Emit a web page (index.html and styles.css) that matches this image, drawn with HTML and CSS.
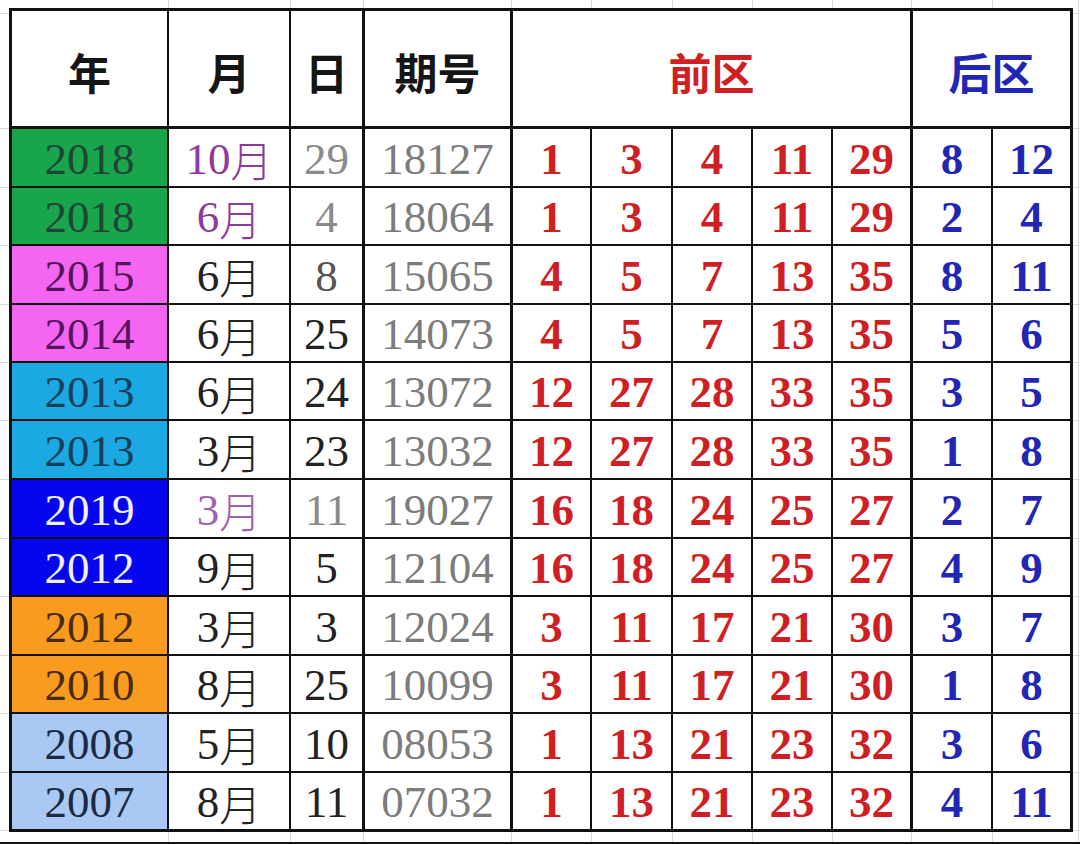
FILE: index.html
```html
<!DOCTYPE html>
<html lang="zh-CN">
<head>
<meta charset="utf-8">
<title>大乐透</title>
<link rel="stylesheet" href="styles.css">
</head>
<body>
<div class="sheet">
  <div class="c h">年</div>
  <div class="c h">月</div>
  <div class="c h tr">日</div>
  <div class="c h tr">期号</div>
  <div class="c h front tr span5">前区</div>
  <div class="c h back tr span2">后区</div>

  <div class="c yr green">2018</div><div class="c mo purple">10<span class="cj">月</span></div><div class="c dy gray tr">29</div><div class="c qi tr">18127</div>
  <div class="c r">1</div><div class="c r">3</div><div class="c r">4</div><div class="c r">11</div><div class="c r tr">29</div><div class="c b">8</div><div class="c b tr">12</div>

  <div class="c yr green">2018</div><div class="c mo purple">6<span class="cj">月</span></div><div class="c dy gray tr">4</div><div class="c qi tr">18064</div>
  <div class="c r">1</div><div class="c r">3</div><div class="c r">4</div><div class="c r">11</div><div class="c r tr">29</div><div class="c b">2</div><div class="c b tr">4</div>

  <div class="c yr pink">2015</div><div class="c mo">6<span class="cj">月</span></div><div class="c dy mid tr">8</div><div class="c qi tr">15065</div>
  <div class="c r">4</div><div class="c r">5</div><div class="c r">7</div><div class="c r">13</div><div class="c r tr">35</div><div class="c b">8</div><div class="c b tr">11</div>

  <div class="c yr pink">2014</div><div class="c mo">6<span class="cj">月</span></div><div class="c dy tr">25</div><div class="c qi tr">14073</div>
  <div class="c r">4</div><div class="c r">5</div><div class="c r">7</div><div class="c r">13</div><div class="c r tr">35</div><div class="c b">5</div><div class="c b tr">6</div>

  <div class="c yr cyan">2013</div><div class="c mo">6<span class="cj">月</span></div><div class="c dy tr">24</div><div class="c qi tr">13072</div>
  <div class="c r">12</div><div class="c r">27</div><div class="c r">28</div><div class="c r">33</div><div class="c r tr">35</div><div class="c b">3</div><div class="c b tr">5</div>

  <div class="c yr cyan">2013</div><div class="c mo">3<span class="cj">月</span></div><div class="c dy tr">23</div><div class="c qi tr">13032</div>
  <div class="c r">12</div><div class="c r">27</div><div class="c r">28</div><div class="c r">33</div><div class="c r tr">35</div><div class="c b">1</div><div class="c b tr">8</div>

  <div class="c yr blue">2019</div><div class="c mo lilac">3<span class="cj">月</span></div><div class="c dy gray tr">11</div><div class="c qi tr">19027</div>
  <div class="c r">16</div><div class="c r">18</div><div class="c r">24</div><div class="c r">25</div><div class="c r tr">27</div><div class="c b">2</div><div class="c b tr">7</div>

  <div class="c yr blue">2012</div><div class="c mo">9<span class="cj">月</span></div><div class="c dy tr">5</div><div class="c qi tr">12104</div>
  <div class="c r">16</div><div class="c r">18</div><div class="c r">24</div><div class="c r">25</div><div class="c r tr">27</div><div class="c b">4</div><div class="c b tr">9</div>

  <div class="c yr orange">2012</div><div class="c mo">3<span class="cj">月</span></div><div class="c dy tr">3</div><div class="c qi tr">12024</div>
  <div class="c r">3</div><div class="c r">11</div><div class="c r">17</div><div class="c r">21</div><div class="c r tr">30</div><div class="c b">3</div><div class="c b tr">7</div>

  <div class="c yr orange">2010</div><div class="c mo">8<span class="cj">月</span></div><div class="c dy tr">25</div><div class="c qi tr">10099</div>
  <div class="c r">3</div><div class="c r">11</div><div class="c r">17</div><div class="c r">21</div><div class="c r tr">30</div><div class="c b">1</div><div class="c b tr">8</div>

  <div class="c yr sky">2008</div><div class="c mo">5<span class="cj">月</span></div><div class="c dy tr">10</div><div class="c qi tr">08053</div>
  <div class="c r">1</div><div class="c r">13</div><div class="c r">21</div><div class="c r">23</div><div class="c r tr">32</div><div class="c b">3</div><div class="c b tr">6</div>

  <div class="c yr sky last">2007</div><div class="c mo last">8<span class="cj">月</span></div><div class="c dy tr last">11</div><div class="c qi tr last">07032</div>
  <div class="c r last">1</div><div class="c r last">13</div><div class="c r last">21</div><div class="c r last">23</div><div class="c r tr last">32</div><div class="c b last">4</div><div class="c b tr last">11</div>
</div>
<div class="bar"></div>
</body>
</html>
```

FILE: styles.css
```css
html, body {
  margin: 0;
  padding: 0;
}

body {
  width: 1080px;
  height: 844px;
  overflow: hidden;
  background-color: #ffffff;
  font-family: "Liberation Serif", "Noto Sans CJK SC", serif;
  background-image:
    linear-gradient(#d9d9d9, #d9d9d9), linear-gradient(#d9d9d9, #d9d9d9),
    linear-gradient(#d9d9d9, #d9d9d9), linear-gradient(#d9d9d9, #d9d9d9),
    linear-gradient(#d9d9d9, #d9d9d9), linear-gradient(#d9d9d9, #d9d9d9),
    linear-gradient(#d9d9d9, #d9d9d9), linear-gradient(#d9d9d9, #d9d9d9),
    linear-gradient(#d9d9d9, #d9d9d9), linear-gradient(#d9d9d9, #d9d9d9),
    linear-gradient(#d9d9d9, #d9d9d9), linear-gradient(#d9d9d9, #d9d9d9),
    linear-gradient(#d9d9d9, #d9d9d9), linear-gradient(#d9d9d9, #d9d9d9),
    linear-gradient(#d9d9d9, #d9d9d9), linear-gradient(#d9d9d9, #d9d9d9),
    linear-gradient(#d9d9d9, #d9d9d9), linear-gradient(#d9d9d9, #d9d9d9),
    linear-gradient(#d9d9d9, #d9d9d9), linear-gradient(#d9d9d9, #d9d9d9),
    linear-gradient(#d9d9d9, #d9d9d9), linear-gradient(#d9d9d9, #d9d9d9),
    linear-gradient(#d9d9d9, #d9d9d9), linear-gradient(#d9d9d9, #d9d9d9),
    linear-gradient(#d9d9d9, #d9d9d9);
  background-repeat: no-repeat;
  background-size:
    1px 100%, 1px 100%, 1px 100%, 1px 100%, 1px 100%, 1px 100%,
    1px 100%, 1px 100%, 1px 100%, 1px 100%, 1px 100%,
    100% 1px, 100% 1px, 100% 1px, 100% 1px, 100% 1px, 100% 1px, 100% 1px,
    100% 1px, 100% 1px, 100% 1px, 100% 1px, 100% 1px, 100% 1px, 100% 1px;
  background-position:
    168px 0, 290px 0, 363px 0, 511px 0, 591px 0, 672px 0,
    752px 0, 832px 0, 911px 0, 992px 0, 1078px 0,
    0 13px, 0 128px, 0 187px, 0 245px, 0 304px, 0 362px, 0 420px,
    0 479px, 0 538px, 0 596px, 0 655px, 0 713px, 0 772px, 0 830px;
}

.sheet {
  margin: 8px 0 0 9px;
  width: 1061px;
  display: grid;
  grid-template-columns: 157px 122px 74px 148px 79px 81px 80px 80px 80px 80px 80px;
  grid-template-rows: 118px 59px 58px 59px 58px 58px 59px 59px 58px 59px 58px 59px 59px;
  border-left: 3px solid #111;
  border-top: 3px solid #111;
}

.c {
  box-sizing: border-box;
  background: #ffffff;
  border-right: 2px solid #111;
  border-bottom: 2px solid #111;
  display: flex;
  align-items: center;
  justify-content: center;
  font-size: 45px;
  line-height: 1;
  padding-top: 3px;
  white-space: nowrap;
  color: #222;
}

.tr {
  border-right-width: 3px;
}

.last {
  border-bottom-width: 3px;
}

.h {
  border-bottom-width: 3px;
  font-family: "Noto Sans CJK SC", sans-serif;
  font-weight: 600;
  font-size: 43px;
  color: #151515;
  padding-top: 6px;
}

.span5 {
  grid-column: span 5;
}

.span2 {
  grid-column: span 2;
}

.front {
  color: #cf1f24;
}

.back {
  color: #2226b4;
}

.mo {
  font-family: "Liberation Serif", serif;
  font-weight: 400;
}

.cj {
  font-family: "Noto Sans CJK SC", sans-serif;
  font-weight: 300;
  font-size: 42px;
}

.yr {
  color: #2b2b2b;
}

.green {
  background: #19a54b;
  color: #1f4538;
}

.pink {
  background: #f466f2;
  color: #55145a;
}

.cyan {
  background: #1aa9e3;
  color: #173f57;
}

.blue {
  background: #0606ee;
  color: #eef0ff;
}

.orange {
  background: #f89b1e;
  color: #4a2a0c;
}

.sky {
  background: #a9c9f4;
  color: #1b2a42;
}

.purple {
  color: #8e3a9c;
}

.lilac {
  color: #a062ae;
}

.dy {
  color: #222;
}

.gray {
  color: #8a8a8a;
}

.mid {
  color: #555;
}

.qi {
  color: #7c7c7c;
}

.r {
  color: #cf1f24;
  font-weight: 700;
}

.b {
  color: #2226b4;
  font-weight: 700;
}

.bar {
  margin-top: 10px;
  height: 2px;
  background: #111;
}
```
